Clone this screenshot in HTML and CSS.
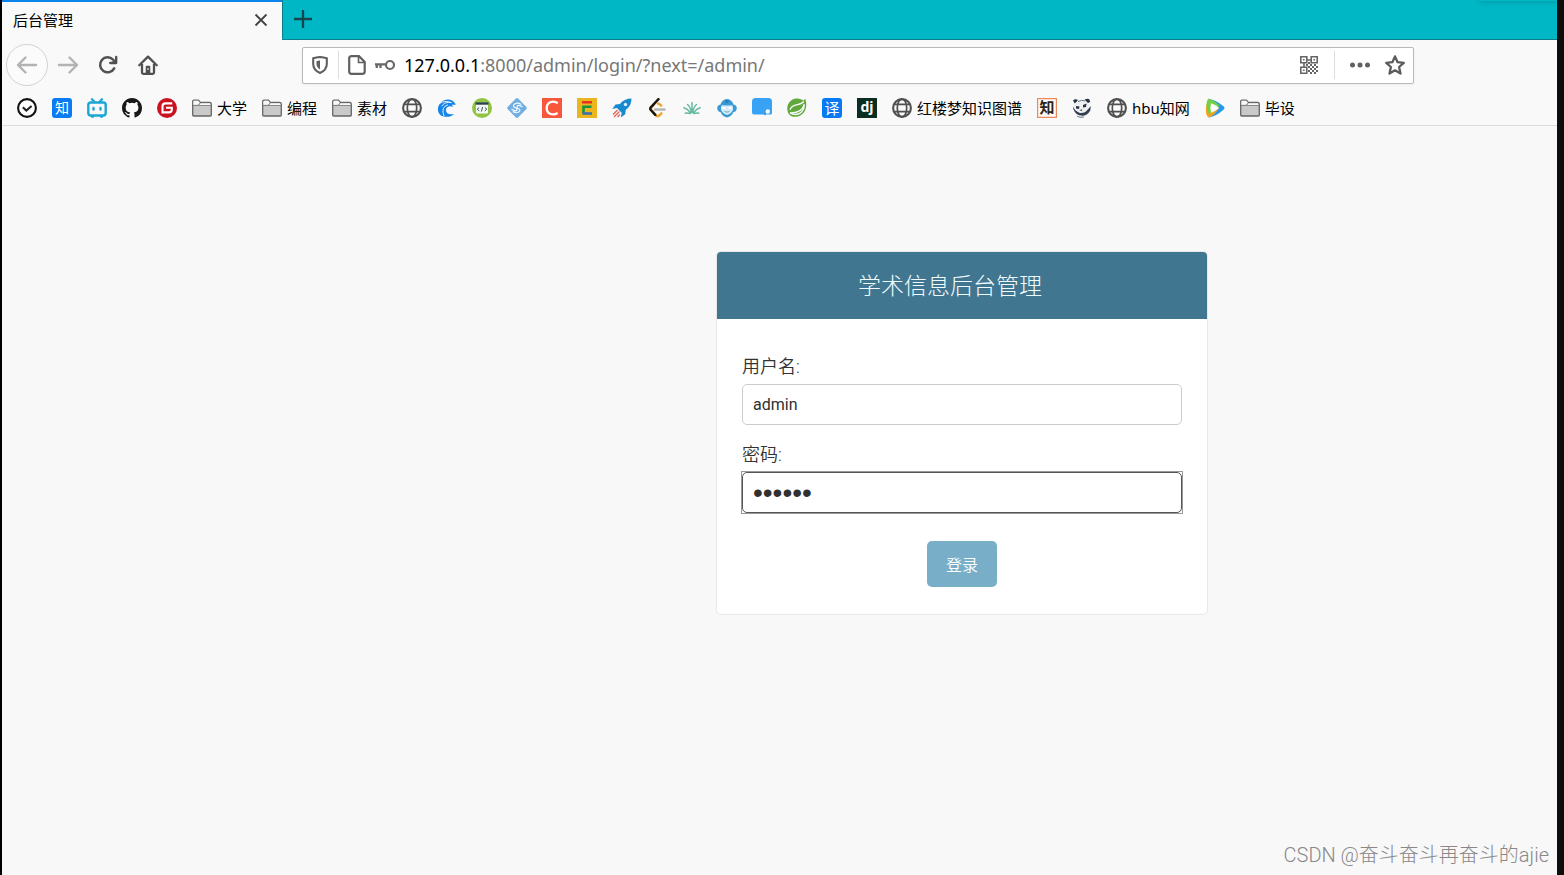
FILE: index.html
```html
<!DOCTYPE html>
<html lang="zh-CN">
<head>
<meta charset="utf-8">
<title>后台管理</title>
<link rel="stylesheet" href="styles.css">
</head>
<body>
<svg class="defs" aria-hidden="true">
  <defs>
    <symbol id="folder" viewBox="0 0 20 20"><path d="M.7 17V3.600q0-1.500 1.500-1.500h4.200l2 2.400h9q1.900 0 1.900 1.600V17q0 1-1 1H1.700q-1 0-1-1z" fill="#c9c9c9" stroke="#666" stroke-width="1.300"/><path d="M1.400 7.200V3.800q0-1 1-1h3.800l2 2.500h9.200q1 0 1 1v.9z" fill="#f7f7f7"/><path d="M.8 7.400h4.500q2 0 3-2.700" fill="none" stroke="#777"/><path d="M5 7.500h14" stroke="#888"/></symbol>
    <symbol id="globe" viewBox="0 0 20 20"><g fill="none" stroke="#505050" stroke-width="1.700"><circle cx="10" cy="10" r="8.900" stroke-width="2.100"/><ellipse cx="10" cy="10" rx="4.700" ry="8.900"/><path d="M2.500 6.400h15M2.500 13.600h15"/></g></symbol>
  </defs>
</svg>
<div class="window">
  <header class="tabs">
    <div class="tab"><span>后台管理</span>
      <button class="icon-button" aria-label="关闭标签页"><svg width="14" height="14" viewBox="0 0 14 14"><path d="M1.500 1.500l11 11M12.500 1.500l-11 11" stroke="#444" stroke-width="1.800"/></svg></button>
    </div>
    <button class="icon-button new-tab" aria-label="新建标签页"><svg width="18" height="18" viewBox="0 0 18 18"><path d="M9 0v18M0 9h18" stroke="#174650" stroke-width="2.300"/></svg></button>
    <span class="window-control"></span>
  </header>
  <nav class="toolbar">
    <button class="icon-button back" aria-label="后退"><svg width="22" height="22" viewBox="0 0 22 22" fill="none" stroke="#b3b3b3" stroke-width="2.400" stroke-linecap="round" stroke-linejoin="round"><path d="M20 11H2M9.500 3.500L2 11l7.500 7.500"/></svg></button>
    <button class="icon-button nav-button" aria-label="前进"><svg width="22" height="22" viewBox="0 0 22 22" fill="none" stroke="#b3b3b3" stroke-width="2.400" stroke-linecap="round" stroke-linejoin="round"><path d="M2 11h18M12.500 3.500L20 11l-7.500 7.500"/></svg></button>
    <button class="icon-button nav-button" aria-label="刷新"><svg width="20" height="20" viewBox="0 0 20 20"><path d="M16.200 13.400A7.500 7.500 0 1 1 15 4.600" fill="none" stroke="#505050" stroke-width="2.500" stroke-linecap="round"/><path d="M18.200 2v6h-6" fill="none" stroke="#505050" stroke-width="2.300" stroke-linecap="round" stroke-linejoin="round"/><path d="M18 3v5h-5z" fill="#505050"/></svg></button>
    <button class="icon-button nav-button" aria-label="主页"><svg width="20" height="20" viewBox="0 0 20 20"><path d="M1.300 10.300L10 1.600l8.700 8.700" fill="none" stroke="#505050" stroke-width="2.300" stroke-linecap="round" stroke-linejoin="round"/><path d="M4 9v8.500q0 1.300 1.300 1.300h9.400q1.300 0 1.300-1.300V9" fill="none" stroke="#505050" stroke-width="2.300"/><path d="M7.700 19v-7.300q0-1 1-1h2.600q1 0 1 1V19z" fill="#505050"/><path d="M10 13v2" stroke="#f9f9fa"/></svg></button>
    <div class="address">
      <svg width="18" height="18" viewBox="0 0 18 18"><path d="M9 1Q5.800 1.200 2.200 2.200V8q0 6 6.800 9 6.800-3 6.800-9V2.200Q12.200 1.200 9 1z" fill="none" stroke="#606060" stroke-width="2.100"/><path d="M9 4.400v9Q5.500 11.500 5.500 8V5z" fill="#606060"/></svg>
      <span class="divider"></span>
      <svg width="18" height="20" viewBox="0 0 18 20"><path d="M3.500 1.200H11l5.700 5.700v9.600q0 2.300-2.300 2.300H3.500q-2.300 0-2.300-2.300v-13q0-2.300 2.300-2.300z" fill="none" stroke="#606060" stroke-width="2.200"/><path d="M10.500 1.500v6H16" fill="none" stroke="#606060" stroke-width="1.600"/></svg>
      <svg width="20" height="12" viewBox="0 0 20 12"><circle cx="15" cy="6" r="4" fill="none" stroke="#686868" stroke-width="2.200"/><path d="M0 5.300h11M1.800 5v4M5.500 5v4" stroke="#686868" stroke-width="2.300"/></svg>
      <div class="url"><b>127.0.0.1</b>:8000/admin/login/?next=/admin/</div>
      <svg class="qr" width="18" height="18" viewBox="0 0 18 18" fill="none" stroke="#666" stroke-width="1.600"><path d="M.8.800h6v6h-6zM11.200.800h6v6h-6zM.8 11.200h6v6h-6z"/><path d="M3 3.800h1.600M13.400 3.800H15M3 14.200h1.600M7 4h4M4 7v4"/><path d="M8 7h2M6 9h2M10 9h2M14 9h2M8 11h2M12 11h2M16 11h2M10 13h2M14 13h2M8 15h2M12 15h2M16 15h2M10 17h2M14 17h2" stroke-width="2"/></svg>
      <span class="divider"></span>
      <svg class="dots" width="20" height="6" viewBox="0 0 20 6" fill="#606060"><circle cx="2.500" cy="3" r="2.500"/><circle cx="10" cy="3" r="2.500"/><circle cx="17.500" cy="3" r="2.500"/></svg>
      <svg width="20" height="20" viewBox="0 0 20 20"><path d="M10 1.400l2.600 5.800 6.200.7-4.700 4.100 1.400 6.600-5.500-3.300-5.500 3.300 1.400-6.600L1.200 7.900l6.200-.7z" fill="none" stroke="#5c5c5c" stroke-width="2.300" stroke-linejoin="round"/></svg>
    </div>
  </nav>
  <nav class="bookmarks" aria-label="书签">
    <a href="#" aria-label="待办"><svg viewBox="0 0 20 20"><circle cx="10" cy="10" r="8.900" fill="#fff" stroke="#111" stroke-width="2.100"/><path d="M5.800 9.300l3.500 3.300 5.300-4.600" fill="none" stroke="#222" stroke-width="2"/></svg></a>
    <a href="#" aria-label="知乎"><svg viewBox="0 0 20 20"><rect width="20" height="20" rx="3" fill="#087bf5"/><text x="10" y="15" font-size="14" text-anchor="middle" fill="#fff">知</text></svg></a>
    <a href="#" aria-label="哔哩哔哩"><svg viewBox="0 0 20 20" fill="none" stroke="#1ba7d3" stroke-width="2.400" stroke-linecap="round"><path d="M5 1.300L7.500 4M15 1.300L12.500 4"/><rect x="1.300" y="4.500" width="17.400" height="13" rx="2.500"/><path d="M6.500 10v1.500M13.500 10v1.500"/><path d="M5 18.500h1M14 18.500h1"/></svg></a>
    <a href="#" aria-label="GitHub"><svg viewBox="0 0 16 16" fill="#191717"><path d="M8 0C3.580 0 0 3.580 0 8c0 3.540 2.290 6.530 5.470 7.590.4.070.55-.17.55-.38 0-.19-.010-.82-.010-1.490-2.010.37-2.530-.49-2.690-.94-.090-.23-.48-.94-.82-1.130-.28-.15-.68-.52-.010-.53.63-.010 1.080.58 1.230.82.72 1.210 1.870.87 2.330.66.070-.52.28-.87.51-1.070-1.780-.2-3.640-.89-3.640-3.950 0-.87.310-1.590.82-2.150-.080-.2-.36-1.020.080-2.120 0 0 .67-.21 2.200.82a7.600 7.600 0 0 1 4 0c1.530-1.040 2.200-.82 2.200-.82.44 1.100.16 1.920.080 2.120.51.56.82 1.270.82 2.150 0 3.070-1.870 3.750-3.650 3.950.29.25.54.73.54 1.480 0 1.070-.010 1.930-.010 2.200 0 .21.15.46.55.38A8 8 0 0 0 16 8c0-4.420-3.580-8-8-8z"/></svg></a>
    <a href="#" aria-label="Gitee"><svg viewBox="0 0 20 20"><circle cx="10" cy="10" r="10" fill="#c9131f"/><path d="M15.200 5.400H8.500q-3 0-3 3v6h6.300q3 0 3-3V9.800H9" fill="none" stroke="#fff" stroke-width="2.100"/></svg></a>
    <a href="#"><svg><use href="#folder"/></svg><span>大学</span></a>
    <a href="#"><svg><use href="#folder"/></svg><span>编程</span></a>
    <a href="#"><svg><use href="#folder"/></svg><span>素材</span></a>
    <a href="#" aria-label="网站"><svg><use href="#globe"/></svg></a>
    <a href="#" aria-label="波浪"><svg viewBox="0 0 20 20"><path d="M18.800 6.700C16.500.8 8.600-.2 4 4.300c-5.500 5.500-3.200 13.200 3 14.300 4.400.8 8.200-.3 10-2.600-5.200 1.300-8.500-1-8.100-4.200C9.200 8.700 12.800 7.200 16.300 9l-1.500-2.200z" fill="#1584e9"/><path d="M2.500 5.500Q8 2 14.500 4.600 8 3.300 4.700 8.200M7 18Q3.500 9 11 6.800" fill="none" stroke="#f9f9fa" stroke-width=".9"/></svg></a>
    <a href="#" aria-label="代码工具"><svg viewBox="0 0 20 20"><circle cx="10" cy="10" r="10" fill="#92c442"/><rect x="4" y="4.500" width="12" height="11" rx="1" fill="#f4f7f3"/><path d="M3.500 5.500h13" stroke="#28434b" stroke-width="2.400"/><path d="M7.200 9.500l-2 1.700 2 1.700M12.800 9.500l2 1.700-2 1.700M10.600 9l-1.200 4.500" fill="none" stroke="#3c545c"/></svg></a>
    <a href="#" aria-label="菱形"><svg viewBox="0 0 20 20"><path d="M8.900.6q1.100-1 2.200 0l8.300 8.300q1 1.100 0 2.200l-8.300 8.300q-1.100 1-2.200 0L.6 11.100q-1-1.100 0-2.200z" fill="#70aee2"/><path d="M14.200 6.500C9 3.300 4.300 7.300 7.500 9.400l4.300 1.400c3.300 2-1.500 5.800-6 2.700M15.500 9C11.700 5.800 8.500 8 11 9.200M4.500 11c4 3.300 7.200 1.200 4.500-.4" fill="none" stroke="#f2f8ff" stroke-width="1.200"/></svg></a>
    <a href="#" aria-label="CSDN"><svg viewBox="0 0 20 20"><path fill="#f9573b" d="M0 0h20v20H0z"/><path d="M15.800 5.300C10.700 1.800 4.800 4.400 4.700 10s5.500 8.200 11 5" fill="none" stroke="#fff" stroke-width="2.300"/></svg></a>
    <a href="#" aria-label="E站"><svg viewBox="0 0 20 20"><path fill="#ebb51e" d="M0 0h20v20H0z"/><path d="M5 4.300h10" stroke="#e92c23" stroke-width="2.400"/><path d="M14.500 8.700h-8v6.500" fill="none" stroke="#189342" stroke-width="2.600"/><path d="M5.500 15.500H15" stroke="#3e6fac" stroke-width="2.600"/></svg></a>
    <a href="#" aria-label="火箭"><svg viewBox="0 0 20 20"><path d="M19.500.5Q12 .5 8 6L3.500 6.500.3 11l4.700-1 4.700 4.700-.9 4.800 4.400-3.200.6-4.600Q19.500 8 19.500.5z" fill="#178ace"/><circle cx="13.500" cy="6.500" r="1.700" fill="#d8f0ff"/><path d="M5.500 12L1 16.500M7.500 13.500L2 19M8 16.500L5.500 19" stroke="#dc6254" stroke-width="1.300"/></svg></a>
    <a href="#" aria-label="LeetCode"><svg viewBox="0 0 20 20" fill="none" stroke-width="2.400" stroke-linecap="round"><path d="M7 6.500l-2.400 2.600q-1.500 1.600 0 3.200l4.300 5q1.800 1.700 3.500 0l2-2" stroke="#eda52d"/><path d="M11.500 1.200L4 9.100q-1.500 1.600 0 3.200l4.300 4.500" stroke="#151515"/><path d="M10.800 5.500q1.300 0 3.400 2.100" stroke="#eda52d"/><path d="M8 11.500h9.500" stroke="#b6b6b6"/></svg></a>
    <a href="#" aria-label="草叶"><svg viewBox="0 0 20 20" fill="none" stroke="#67b9a0" stroke-width="1.500" stroke-linecap="round"><path d="M10 14.500V4.500M9.300 14.500Q8.500 9 5.500 6.500M10.700 14.500q.8-5.500 3.800-8M8.500 14.800Q6 11 1.800 9.800M11.500 14.800q2.500-3.800 6.700-5M8.300 15.500q-2.500-.8-5-.3M11.700 15.500q2.500-.8 5-.3"/></svg></a>
    <a href="#" aria-label="猴子"><svg viewBox="0 0 20 20"><path d="M10 1Q5 1.500 3.500 6.500Q.3 7 .2 10.300.5 13.800 3.500 14q2 4.500 6.500 5.500 4.500-1 6.500-5.500 3-.2 3.300-3.700-.1-3.300-3.300-3.800Q15 1.500 10 1z" fill="#3999d5"/><path d="M10 7.500L4.800 7.300Q3.500 9 4 12q2 4 6 5 4-1 6-5 .5-3-.8-4.700z" fill="#d3ebf8"/><path d="M5.300 10h3.200M11.500 10h3.200" stroke="#fff" stroke-width="2"/><path d="M7.500 13.500q2.500 1.200 5 0" fill="none" stroke="#75adc9"/><path d="M7.500 2.500l2.500 3 2.500-3z" fill="#217db9"/></svg></a>
    <a href="#" aria-label="云笔记"><svg viewBox="0 0 20 20"><path d="M3.500 0h13Q20 0 20 3.500V15q0 1.500-1.500 1.500H14l-1 1-1.500-1H2Q0 16.500 0 14.500v-11Q0 0 3.500 0z" fill="#38a3f5"/><circle cx="15.800" cy="13.500" r="2.200" fill="#fff"/></svg></a>
    <a href="#" aria-label="Spring"><svg viewBox="0 0 20 20"><path d="M18.300.7Q20.500 8 17.800 13c-3.200 6.200-12.300 8-16 2.900C-1.600 10.500 1.100 2.900 7 1c4.500-1.300 8 .8 9.500 1.600z" fill="#61a83c"/><path d="M3 14.800c7 .4 12.400-1.500 14.300-8.500C17 16.200 9 18.300 3 14.800M3 11.800C5 4.700 13.200 8.300 16.800 3.500" fill="none" stroke="#f9f9fa" stroke-width="1.400"/></svg></a>
    <a href="#" aria-label="翻译"><svg viewBox="0 0 20 20"><rect width="20" height="20" rx="3" fill="#0879f4"/><text x="10" y="15.500" font-size="15" text-anchor="middle" fill="#fff">译</text></svg></a>
    <a href="#" aria-label="Django"><svg viewBox="0 0 20 20"><path fill="#0b2e20" d="M0 0h20v20H0z"/><text class="bold" x="10" y="14" font-size="14" text-anchor="middle" fill="#fff">dj</text></svg></a>
    <a href="#"><svg><use href="#globe"/></svg><span>红楼梦知识图谱</span></a>
    <a href="#" aria-label="知网"><svg viewBox="0 0 20 20"><path d="M.6.600h18.800v18.800H.6z" fill="#fffaf6" stroke="#e88a5b" stroke-width="1.200"/><text class="bold" x="10" y="15" font-size="15" text-anchor="middle" fill="#292522">知</text></svg></a>
    <a href="#" aria-label="熊猫"><svg viewBox="0 0 20 20"><path d="M3 3L8 3.500 14 2l3 3-1 8-5 6-6-2-4-7z" fill="#eef0f2"/><path d="M1 2.500q2.500-2 5-.5L2.800 5.500zM12.500 1.500Q18-1 18 4l-2 1zM4 8l3.500.5L7 11l-3-.5zM11 7l3.500-1.500L14 9l-3 .5z" fill="#263143"/><path d="M.8 8.500q.7 6.500 6.500 8.800 7 2 11-4.800l.5-4.500-3 3.500Q13 15.500 8 15 3.500 13.500.8 8.500z" fill="#333e50"/><path d="M7.500 12l3-.6-1 1.600z" fill="#222"/><path d="M6 3.500q4-2 7-.5M5 18l3 1.300 4-.3" fill="none" stroke="#6b7480"/></svg></a>
    <a href="#"><svg><use href="#globe"/></svg><span>hbu知网</span></a>
    <a href="#" aria-label="腾讯视频"><svg viewBox="0 0 20 20"><path d="M3.500.8Q11 2 18.500 8.300q2 1.700 0 3.400Q11 18.300 4 19.500 0 10 3.500.8z" fill="#2499ee"/><path d="M1.500 6Q9 6 14 10q-4 7-10 9.500Q-.5 18 1.500 6z" fill="#f6a31b"/><path d="M3 .8Q9 2 14.500 7.500 10 14 4 16-.5 8 3 .8z" fill="#75cf42"/><path d="M6 5.300q5 1.500 8 4.700-3.500 3.200-8 4.700-1.300-4.700 0-9.400z" fill="#fff"/></svg></a>
    <a href="#"><svg><use href="#folder"/></svg><span>毕设</span></a>
  </nav>
  <main class="page">
    <section class="card">
      <h1>学术信息后台管理</h1>
      <form>
        <div class="field"><label for="username">用户名:</label><input id="username" type="text" value="admin"></div>
        <div class="field"><label for="password">密码:</label><div class="focus-ring"><input id="password" type="password" value="123456"></div></div>
        <button class="submit" type="button">登录</button>
      </form>
    </section>
    <div class="watermark">CSDN @奋斗奋斗再奋斗的ajie</div>
  </main>
</div>
</body>
</html>
```
FILE: styles.css
```css
* {
  box-sizing: border-box;
}

body {
  margin: 0;
  background: #f8f8f8;
  color: #000;
  font-family: "Noto Sans", "Noto Sans CJK SC", sans-serif;
}

.defs {
  position: absolute;
  width: 0;
  height: 0;
}

svg {
  display: block;
  flex: none;
}

button,
input {
  font-family: inherit;
}

.window {
  display: flex;
  flex-direction: column;
  min-height: 100vh;
  border-left: 2px solid #000;
  border-right: 7px solid #0e0d0b;
}

.icon-button {
  display: flex;
  align-items: center;
  justify-content: center;
  padding: 0;
  border: 0;
  background: none;
}

.tabs {
  display: flex;
  height: 40px;
  overflow: hidden;
  background: linear-gradient(#00b7c5 39px, #087f8b 39px);
}

.tab {
  display: flex;
  align-items: center;
  justify-content: space-between;
  width: 280px;
  padding: 0 14px 2px 11px;
  border-top: 2px solid #0a84e8;
  background: #f9f9fa;
  font-size: 15px;
  line-height: 20px;
}

.new-tab {
  width: 40px;
  height: 38px;
  border-left: 1px solid #087f8b;
}

.window-control {
  width: 78px;
  height: 1px;
  margin-left: auto;
  box-shadow: 0 0 5px #00434b;
}

.toolbar {
  display: flex;
  align-items: center;
  height: 50px;
  padding: 0 143px 0 4px;
  background: #f9f9fa;
}

.back {
  width: 42px;
  height: 42px;
  border: 1px solid #d2d2d3;
  border-radius: 50%;
  background: #fbfbfb;
}

.nav-button {
  width: 40px;
  height: 40px;
}

.address {
  display: flex;
  flex: 1;
  align-items: center;
  gap: 9px;
  height: 37px;
  margin-left: 134px;
  padding: 0 8px;
  border: 1px solid #b9b9bd;
  border-radius: 2px;
  background: #fff;
  box-shadow: 0 1px 3px #0000000d;
}

.divider {
  width: 1px;
  height: 28px;
  background: #dedede;
}

.url {
  flex: 1;
  color: #777;
  font-size: 18px;
  line-height: 24px;
  white-space: nowrap;
}

.url b {
  color: #000;
  font-weight: 400;
}

.qr {
  margin-right: 7px;
}

.dots {
  margin: 0 6px;
}

.bookmarks {
  display: flex;
  align-items: center;
  gap: 15px;
  height: 36px;
  padding: 0 15px;
  border-bottom: 1px solid #dcdcdd;
  background: #f9f9fa;
  font-size: 15px;
  line-height: 20px;
  white-space: nowrap;
}

.bookmarks a {
  display: flex;
  align-items: center;
  gap: 5px;
  color: #000;
  text-decoration: none;
}

.bookmarks svg {
  width: 20px;
  height: 20px;
}

.bold {
  font-weight: 700;
}

.page {
  position: relative;
  display: flex;
  flex: 1;
  align-items: flex-start;
  justify-content: center;
  padding: 125px 0 60px 365px;
  background: #f8f8f8;
}

.card {
  width: 492px;
  border: 1px solid #e8e8e8;
  border-radius: 5px;
  overflow: hidden;
  background: #fff;
  font-family: Roboto, "Noto Sans CJK SC", sans-serif;
}

.card h1 {
  margin: 0;
  padding: 20px 24px 17px 0;
  background: #417690;
  color: #f0fbff;
  font-size: 23px;
  font-weight: 300;
  line-height: 30px;
  text-align: center;
}

form {
  display: flex;
  flex-direction: column;
  padding: 36px 25px 27px;
}

.field {
  display: flex;
  flex-direction: column;
  gap: 5px;
  margin-bottom: 18px;
}

label {
  color: #333;
  font-size: 18px;
  font-weight: 350;
  line-height: 24px;
}

input {
  display: block;
  width: 100%;
  height: 41px;
  padding: 0 10px;
  border: 1px solid #ccc;
  border-radius: 5px;
  background: #fff;
  color: #303030;
  font-size: 16px;
}

.focus-ring {
  margin: -1px;
  border: 1px solid #999;
}

.focus-ring input {
  border-color: #555;
  font-family: "Liberation Sans", sans-serif;
  font-size: 28px;
}

.submit {
  align-self: center;
  width: 70px;
  height: 46px;
  margin-top: 10px;
  border: 0;
  border-radius: 5px;
  background: #79aec8;
  color: #fff;
  font-size: 16px;
  font-weight: 350;
}

.watermark {
  position: absolute;
  right: 8px;
  bottom: 6px;
  color: #888;
  font-family: Roboto, "Noto Sans CJK SC", sans-serif;
  font-size: 20px;
  font-weight: 300;
  line-height: 28px;
}
```
